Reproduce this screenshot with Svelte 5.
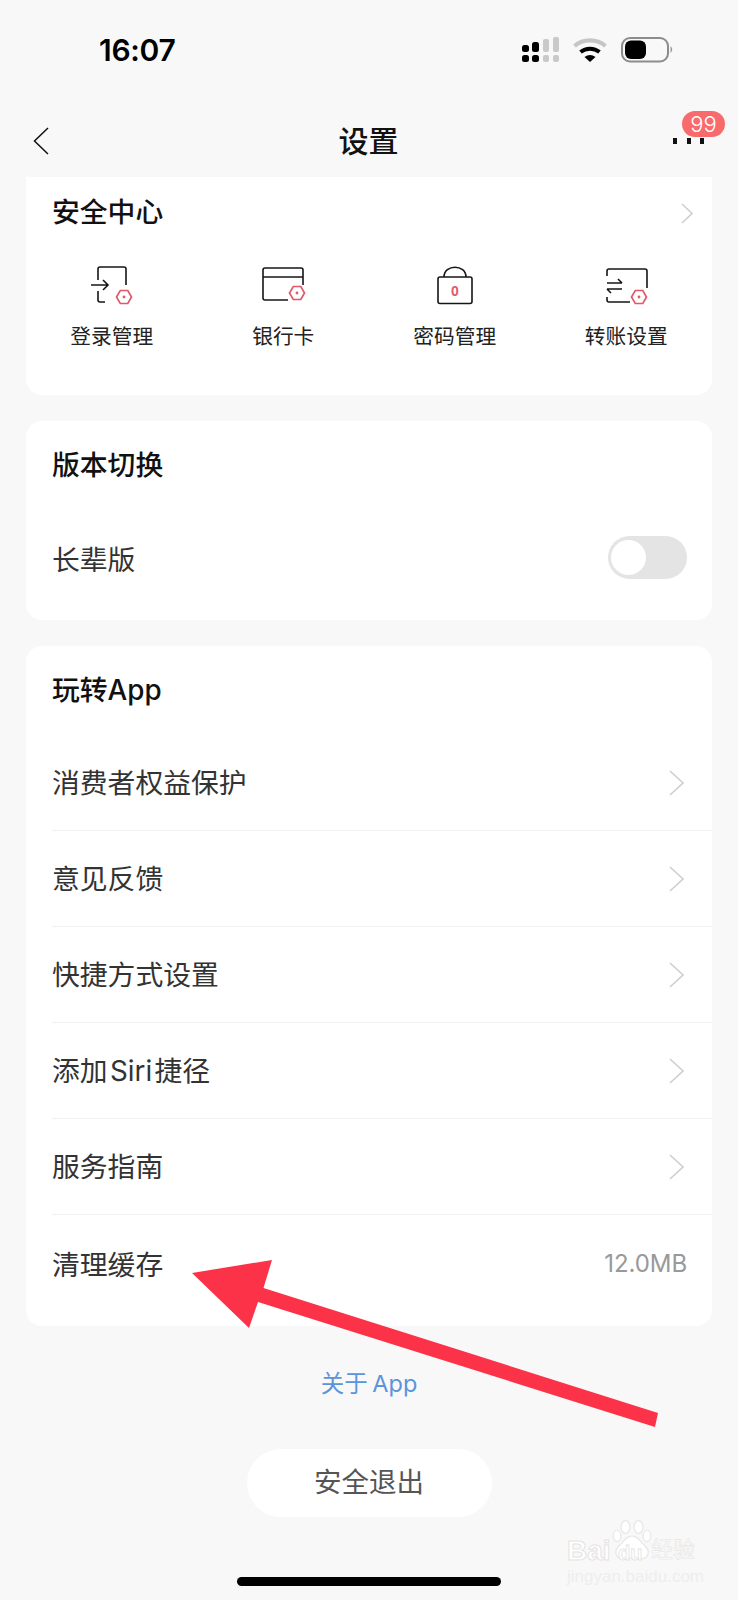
<script lang="ts">
	const tools = [
		{ label: '登录管理', kind: 'login' },
		{ label: '银行卡', kind: 'card' },
		{ label: '密码管理', kind: 'lock' },
		{ label: '转账设置', kind: 'transfer' }
	];

	const rows = [
		{ label: '消费者权益保护' },
		{ label: '意见反馈' },
		{ label: '快捷方式设置' },
		{ label: '添加 Siri 捷径' },
		{ label: '服务指南' }
	];

	const hexPoints = (cx: number, cy: number, r: number) =>
		[0, 60, 120, 180, 240, 300]
			.map((a) => {
				const t = (a * Math.PI) / 180;
				return `${(cx + r * Math.cos(t)).toFixed(1)},${(cy + r * Math.sin(t)).toFixed(1)}`;
			})
			.join(' ');
</script>

{#snippet hex(cx: number, cy: number)}
	<polygon points={hexPoints(cx, cy, 7.5)} fill="#fff" stroke="#e0596a" stroke-width="1.7" />
	<circle {cx} {cy} r="1.4" fill="#e0596a" stroke="none" />
{/snippet}

<div class="page">
	<div class="status">
		<span class="time">16:07</span>
		<div class="status-icons">
			<svg width="38" height="26" viewBox="0 0 38 26">
				<rect x="0" y="8" width="7" height="7" rx="2.5" fill="#000" />
				<rect x="0" y="18" width="7" height="7" rx="2.5" fill="#000" />
				<rect x="10" y="5" width="7" height="10" rx="2.5" fill="#000" />
				<rect x="10" y="18" width="7" height="7" rx="2.5" fill="#000" />
				<rect x="21" y="2" width="6" height="13" rx="2" fill="#c9c9c9" />
				<rect x="21" y="18" width="6" height="7" rx="2" fill="#c9c9c9" />
				<rect x="31" y="0" width="6" height="15" rx="2" fill="#c9c9c9" />
				<rect x="31" y="18" width="6" height="7" rx="2" fill="#c9c9c9" />
			</svg>
			<svg class="wifi" width="34" height="26" viewBox="0 0 34 26">
				<path d="M1.500 9 C10 1.500 24 1.500 32.500 9" fill="none" stroke="#c6c6c6" stroke-width="4.2" />
				<path d="M7.500 15 C13 10.500 21 10.500 26.500 15" fill="none" stroke="#000" stroke-width="4" />
				<path d="M11.500 20 Q17 16 22.500 20 L17 25 Z" fill="#000" />
			</svg>
			<svg class="battery" width="53" height="26" viewBox="0 0 53 26">
				<rect x="1" y="1" width="46" height="23.500" rx="8" fill="none" stroke="#8c8c8c" stroke-width="2" />
				<rect x="4" y="3.500" width="21" height="18.500" rx="6" fill="#000" />
				<path d="M49.500 9 Q53 12.500 49.500 16 Z" fill="#9a9a9a" />
			</svg>
		</div>
	</div>

	<div class="nav">
		<svg class="back" width="16" height="28" viewBox="0 0 16 28">
			<path d="M15 1 L1.500 14 L15 27" fill="none" stroke="#111" stroke-width="1.5" />
		</svg>
		<span class="nav-title">设置</span>
		<div class="more">
			<span class="dot"></span><span class="dot"></span><span class="dot"></span>
			<span class="badge">99</span>
		</div>
	</div>

	<section class="card card-top">
		<div class="head">
			<h2>安全中心</h2>
			<svg class="head-chev" width="12" height="21" viewBox="0 0 12 21">
				<path d="M1 1 L11 10.500 L1 20" fill="none" stroke="#cfcfcf" stroke-width="1.6" />
			</svg>
		</div>
		<div class="tools">
			{#each tools as tool}
				<div class="tool">
					<svg width="60" height="40" viewBox="0 0 60 40" fill="none" stroke="#161616" stroke-width="1.6">
						{#if tool.kind === 'login'}
							<path d="M16 15 V4 Q16 2 18 2 H42 Q44 2 44 4 V20 M16 26 V35 Q16 37 18 37 H23" />
							<path d="M9 20 H26 M21 15 L26 20 L21 25" />
							{@render hex(42, 32)}
						{:else if tool.kind === 'card'}
							<path d="M50 20 V5 Q50 3 48 3 H12 Q10 3 10 5 V33 Q10 35 12 35 H35 M10 12 H50" />
							{@render hex(44, 28)}
						{:else if tool.kind === 'lock'}
							<rect x="13" y="12" width="34" height="26.500" rx="2" />
							<path d="M19 12 C19 -1 41 -1 41 12" />
							<text x="30" y="31" class="zero">0</text>
						{:else}
							<path d="M11 11 V6 Q11 4 13 4 H49 Q51 4 51 6 V23 M11 32 V35 Q11 37 13 37 H34" />
							<path d="M11 18 H26 M22 14 L26 18 M11 24 H26 M11 24 L15 28" />
							{@render hex(43, 32)}
						{/if}
					</svg>
					<span class="tool-label">{tool.label}</span>
				</div>
			{/each}
		</div>
	</section>

	<section class="card card-version">
		<h2 class="title-row">版本切换</h2>
		<div class="row no-line">
			<span>长辈版</span>
			<div class="toggle"><span class="knob"></span></div>
		</div>
	</section>

	<section class="card card-list">
		<h2 class="title-row">玩转App</h2>
		{#each rows as row}
			<div class="row">
				<span>{row.label}</span>
				<svg class="chev" width="15" height="26" viewBox="0 0 15 26">
					<path d="M1 1 L14 13 L1 25" fill="none" stroke="#cfcfcf" stroke-width="1.6" />
				</svg>
			</div>
		{/each}
		<div class="row no-line">
			<span>清理缓存</span>
			<span class="value">12.0MB</span>
		</div>
	</section>

	<div class="about">关于 App</div>
	<div class="logout">安全退出</div>
	<div class="home-bar"></div>

	<svg class="arrow" width="738" height="1600" viewBox="0 0 738 1600">
		<path d="M192 1273 L272 1260 L263.500 1288 L658 1413 L655 1427 L258 1302 L249 1328 Z" fill="#fb3248" />
	</svg>

	<div class="watermark">
		<svg class="paw" width="40" height="40" viewBox="0 0 40 40" fill="#fff" stroke="#e6e6e6" stroke-width="1.2">
			<ellipse cx="5" cy="16" rx="3.800" ry="5.500" />
			<ellipse cx="13.500" cy="7" rx="4.500" ry="6.300" />
			<ellipse cx="26.500" cy="7" rx="4.500" ry="6.300" />
			<ellipse cx="35" cy="16" rx="3.800" ry="5.500" />
			<path d="M20 16 C26 16 29 22 34 27 C39 33 35 39 28 39 C23 38 17 38 12 39 C5 39 1 33 6 27 C11 22 14 16 20 16 Z" />
		</svg>
		<span class="wm-bai">Bai</span>
		<span class="wm-du">du</span>
		<span class="wm-cn">经验</span>
		<span class="wm-url">jingyan.baidu.com</span>
	</div>
</div>

<style>
	:global(body) {
		margin: 0;
		background: #f8f8f8;
	}

	.page {
		position: relative;
		width: 738px;
		height: 1600px;
		overflow: hidden;
		background: #f8f8f8;
		font-family: Inter, 'Noto Sans CJK SC', sans-serif;
		color: #333;
	}

	.status {
		height: 96px;
		display: flex;
		justify-content: space-between;
		align-items: flex-start;
		padding: 32px 64px 0 99px;
		box-sizing: border-box;
	}

	.time {
		font-size: 30px;
		line-height: 36px;
		font-weight: 600;
		color: #000;
		letter-spacing: -0.3px;
	}

	.status-icons {
		display: flex;
		align-items: flex-start;
		padding-top: 5px;
	}

	.wifi {
		margin-left: 13px;
	}

	.battery {
		margin-left: 14px;
	}

	.nav {
		height: 81px;
		display: grid;
		grid-template-columns: 1fr auto 1fr;
		align-items: center;
		padding: 8px 34px 0 33px;
		box-sizing: border-box;
	}

	.nav-title {
		font-size: 30px;
		line-height: 40px;
		font-weight: 500;
		color: #111;
	}

	.more {
		position: relative;
		width: 31px;
		height: 6px;
		display: flex;
		justify-content: space-between;
		justify-self: end;
	}

	.dot {
		width: 4px;
		height: 6px;
		background: #111;
	}

	.badge {
		position: absolute;
		left: 9px;
		top: -27px;
		width: 43px;
		height: 26px;
		border-radius: 13px;
		background: #f96a6c;
		color: #fff;
		font-size: 22px;
		line-height: 26px;
		text-align: center;
		font-weight: 300;
	}

	.card {
		margin: 0 26px;
		background: #fff;
		border-radius: 16px;
	}

	.card-top {
		height: 218px;
		border-radius: 0 0 16px 16px;
	}

	.card-version {
		margin-top: 26px;
		height: 199px;
	}

	.card-list {
		margin-top: 26px;
		height: 680px;
	}

	h2 {
		margin: 0;
		font-size: 27.800px;
		font-weight: 500;
		color: #111;
	}

	.head {
		height: 66px;
		display: flex;
		align-items: center;
		justify-content: space-between;
		padding: 0 19px 0 26px;
	}

	.head-chev {
		margin-top: 6px;
	}

	.tools {
		display: grid;
		grid-template-columns: repeat(4, 1fr);
		margin-top: 22px;
	}

	.tool {
		display: flex;
		flex-direction: column;
		align-items: center;
	}

	.tool svg {
		overflow: visible;
	}

	.tool-label {
		margin-top: 17px;
		font-size: 20.700px;
		line-height: 30px;
		color: #222;
	}

	.zero {
		font-family: 'Liberation Sans', sans-serif;
		font-size: 14px;
		font-weight: 700;
		fill: #e0596a;
		stroke: none;
		text-anchor: middle;
	}

	.title-row {
		height: 89px;
		line-height: 89px;
		padding-left: 26px;
	}

	.row {
		height: 96px;
		margin-left: 26px;
		padding-right: 28px;
		padding-bottom: 3px;
		border-bottom: 1px solid #f1f1f1;
		box-sizing: border-box;
		display: flex;
		align-items: center;
		justify-content: space-between;
		font-size: 27.800px;
		word-spacing: -5.500px;
		color: #333;
	}

	.no-line {
		border-bottom: none;
		padding-right: 25px;
		padding-bottom: 0;
	}

	.chev {
		margin-top: 3px;
	}

	.value {
		font-size: 24px;
		letter-spacing: -0.1px;
		color: #999;
	}

	.toggle {
		width: 79px;
		height: 43px;
		margin-bottom: 1px;
		border-radius: 22px;
		background: #e4e4e4;
		position: relative;
	}

	.knob {
		position: absolute;
		left: 3px;
		top: 4px;
		width: 35px;
		height: 35px;
		border-radius: 50%;
		background: #fff;
	}

	.about {
		margin-top: 41px;
		text-align: center;
		font-size: 23.500px;
		word-spacing: -2px;
		line-height: 34px;
		color: #5b94dc;
	}

	.logout {
		margin: 48px auto 0;
		width: 245px;
		height: 68px;
		border-radius: 34px;
		background: #fff;
		text-align: center;
		line-height: 66px;
		font-size: 27.500px;
		color: #555;
	}

	.home-bar {
		position: absolute;
		left: 237px;
		top: 1577px;
		width: 264px;
		height: 9px;
		border-radius: 5px;
		background: #000;
	}

	.arrow {
		position: absolute;
		left: 0;
		top: 0;
		pointer-events: none;
	}

	.watermark {
		position: absolute;
		left: 566px;
		top: 1519px;
		width: 134px;
		height: 66px;
		font-family: 'Liberation Sans', 'Noto Sans CJK SC', sans-serif;
		line-height: 1;
		color: #fff;
	}

	.watermark span {
		position: absolute;
		white-space: nowrap;
	}

	.paw {
		position: absolute;
		left: 46px;
		top: 1px;
	}

	.wm-bai {
		left: 1px;
		top: 18px;
		font-size: 28px;
		font-weight: 700;
		-webkit-text-stroke: 1px #e4e4e4;
	}

	.wm-du {
		left: 52px;
		top: 24px;
		font-size: 20px;
		font-weight: 700;
		-webkit-text-stroke: 0.8px #e4e4e4;
	}

	.wm-cn {
		left: 85px;
		top: 20px;
		font-size: 22px;
		-webkit-text-stroke: 0.6px #e4e4e4;
	}

	.wm-url {
		left: 1px;
		top: 49px;
		font-size: 17px;
		color: #eeeeee;
	}
</style>
